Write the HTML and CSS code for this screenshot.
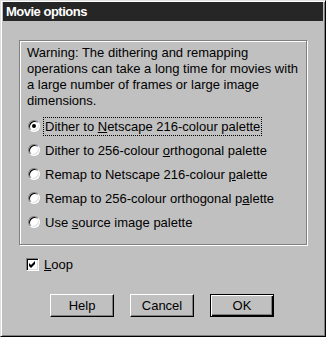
FILE: index.html
```html
<!DOCTYPE html>
<html lang="en">
<head>
  <meta charset="UTF-8">
  <title>Movie options</title>
  <link rel="stylesheet" href="styles.css">
</head>
<body>
  <div class="window">
    <div class="title-bar">Movie options</div>

    <div class="content">
      <div class="group">
        <p class="warning">Warning: The dithering and remapping operations can take a long time for movies with a large number of frames or large image dimensions.</p>

        <div class="option">
          <span class="radio checked"></span>
          <span class="label focus">Dither to <u>N</u>etscape 216-colour palette</span>
        </div>
        <div class="option">
          <span class="radio"></span>
          <span class="label">Dither to 256-colour <u>o</u>rthogonal palette</span>
        </div>
        <div class="option">
          <span class="radio"></span>
          <span class="label">Remap to Netscape 216-colour <u>p</u>alette</span>
        </div>
        <div class="option">
          <span class="radio"></span>
          <span class="label">Remap to 256-colour orthogonal p<u>a</u>lette</span>
        </div>
        <div class="option">
          <span class="radio"></span>
          <span class="label">Use <u>s</u>ource image palette</span>
        </div>
      </div>

      <div class="loop">
        <span class="checkbox">
          <svg width="7" height="7" viewBox="0 0 7 7"><path d="M0 2 L2 4 L6 0 L6 3 L2 7 L0 5 Z" fill="#000"/></svg>
        </span>
        <span class="label"><u>L</u>oop</span>
      </div>

      <div class="buttons">
        <button class="btn">Help</button>
        <button class="btn">Cancel</button>
        <button class="btn default">OK</button>
      </div>
    </div>
  </div>
</body>
</html>
```

FILE: styles.css
```css
body {
  margin: 0;
  padding: 0;
  background-color: #c0c0c0;
  font-family: "Liberation Sans", Arial, sans-serif;
  font-size: 13px;
  color: #000;
}

.window {
  width: 326px;
  height: 337px;
  box-sizing: border-box;
  background-color: #c0c0c0;
  border: 1px solid;
  border-color: #dfdfdf #000 #000 #dfdfdf;
  box-shadow: inset 1px 1px #fff, inset -1px -1px #808080;
  padding: 1px 2px;
}

.title-bar {
  height: 19px;
  line-height: 19px;
  background-color: #262626;
  color: #fff;
  font-size: 13px;
  font-weight: bold;
  letter-spacing: -0.5px;
  padding-left: 3px;
}

.content {
  padding: 19px 16px 0 16px;
}

.group {
  height: 205px;
  box-sizing: border-box;
  border: 1px solid #808080;
  box-shadow: 1px 1px #fff, inset 1px 1px #fff;
  padding: 4px 6px 0 7px;
}

.warning {
  margin: 0 0 5px 0;
  line-height: 16px;
}

.option {
  display: flex;
  align-items: center;
  height: 24px;
}

.radio {
  width: 10px;
  height: 10px;
  border: 1px solid;
  border-color: #808080 #fff #fff #808080;
  border-radius: 50%;
  background-color: #fff;
  box-shadow: inset 1px 1px #000, inset -1px -1px #dfdfdf;
  position: relative;
  margin-left: 1px;
  margin-right: 3px;
}

.radio.checked::after {
  content: "";
  position: absolute;
  left: 3px;
  top: 3px;
  width: 4px;
  height: 4px;
  border-radius: 50%;
  background-color: #000;
}

.label {
  padding: 1px 1px;
  border: 1px dotted transparent;
}

.label.focus {
  border-color: #000;
}

.loop {
  display: flex;
  align-items: center;
  height: 20px;
  margin-top: 9px;
  margin-left: 7px;
}

.checkbox {
  width: 11px;
  height: 11px;
  border: 1px solid;
  border-color: #808080 #fff #fff #808080;
  background-color: #fff;
  box-shadow: inset 1px 1px #000, inset -1px -1px #dfdfdf;
  display: flex;
  align-items: center;
  justify-content: center;
  margin-right: 3px;
}

.buttons {
  display: flex;
  gap: 16px;
  margin-top: 20px;
  padding-left: 31px;
}

.btn {
  width: 64px;
  height: 23px;
  box-sizing: border-box;
  background-color: #c0c0c0;
  font-family: "Liberation Sans", Arial, sans-serif;
  font-size: 13px;
  color: #000;
  border: 1px solid;
  border-color: #fff #000 #000 #fff;
  box-shadow: inset -1px -1px #808080;
  padding: 0;
}

.btn.default {
  border: 1px solid #000;
  box-shadow: inset 1px 1px #fff, inset -1px -1px #000, inset -2px -2px #808080;
}
```
